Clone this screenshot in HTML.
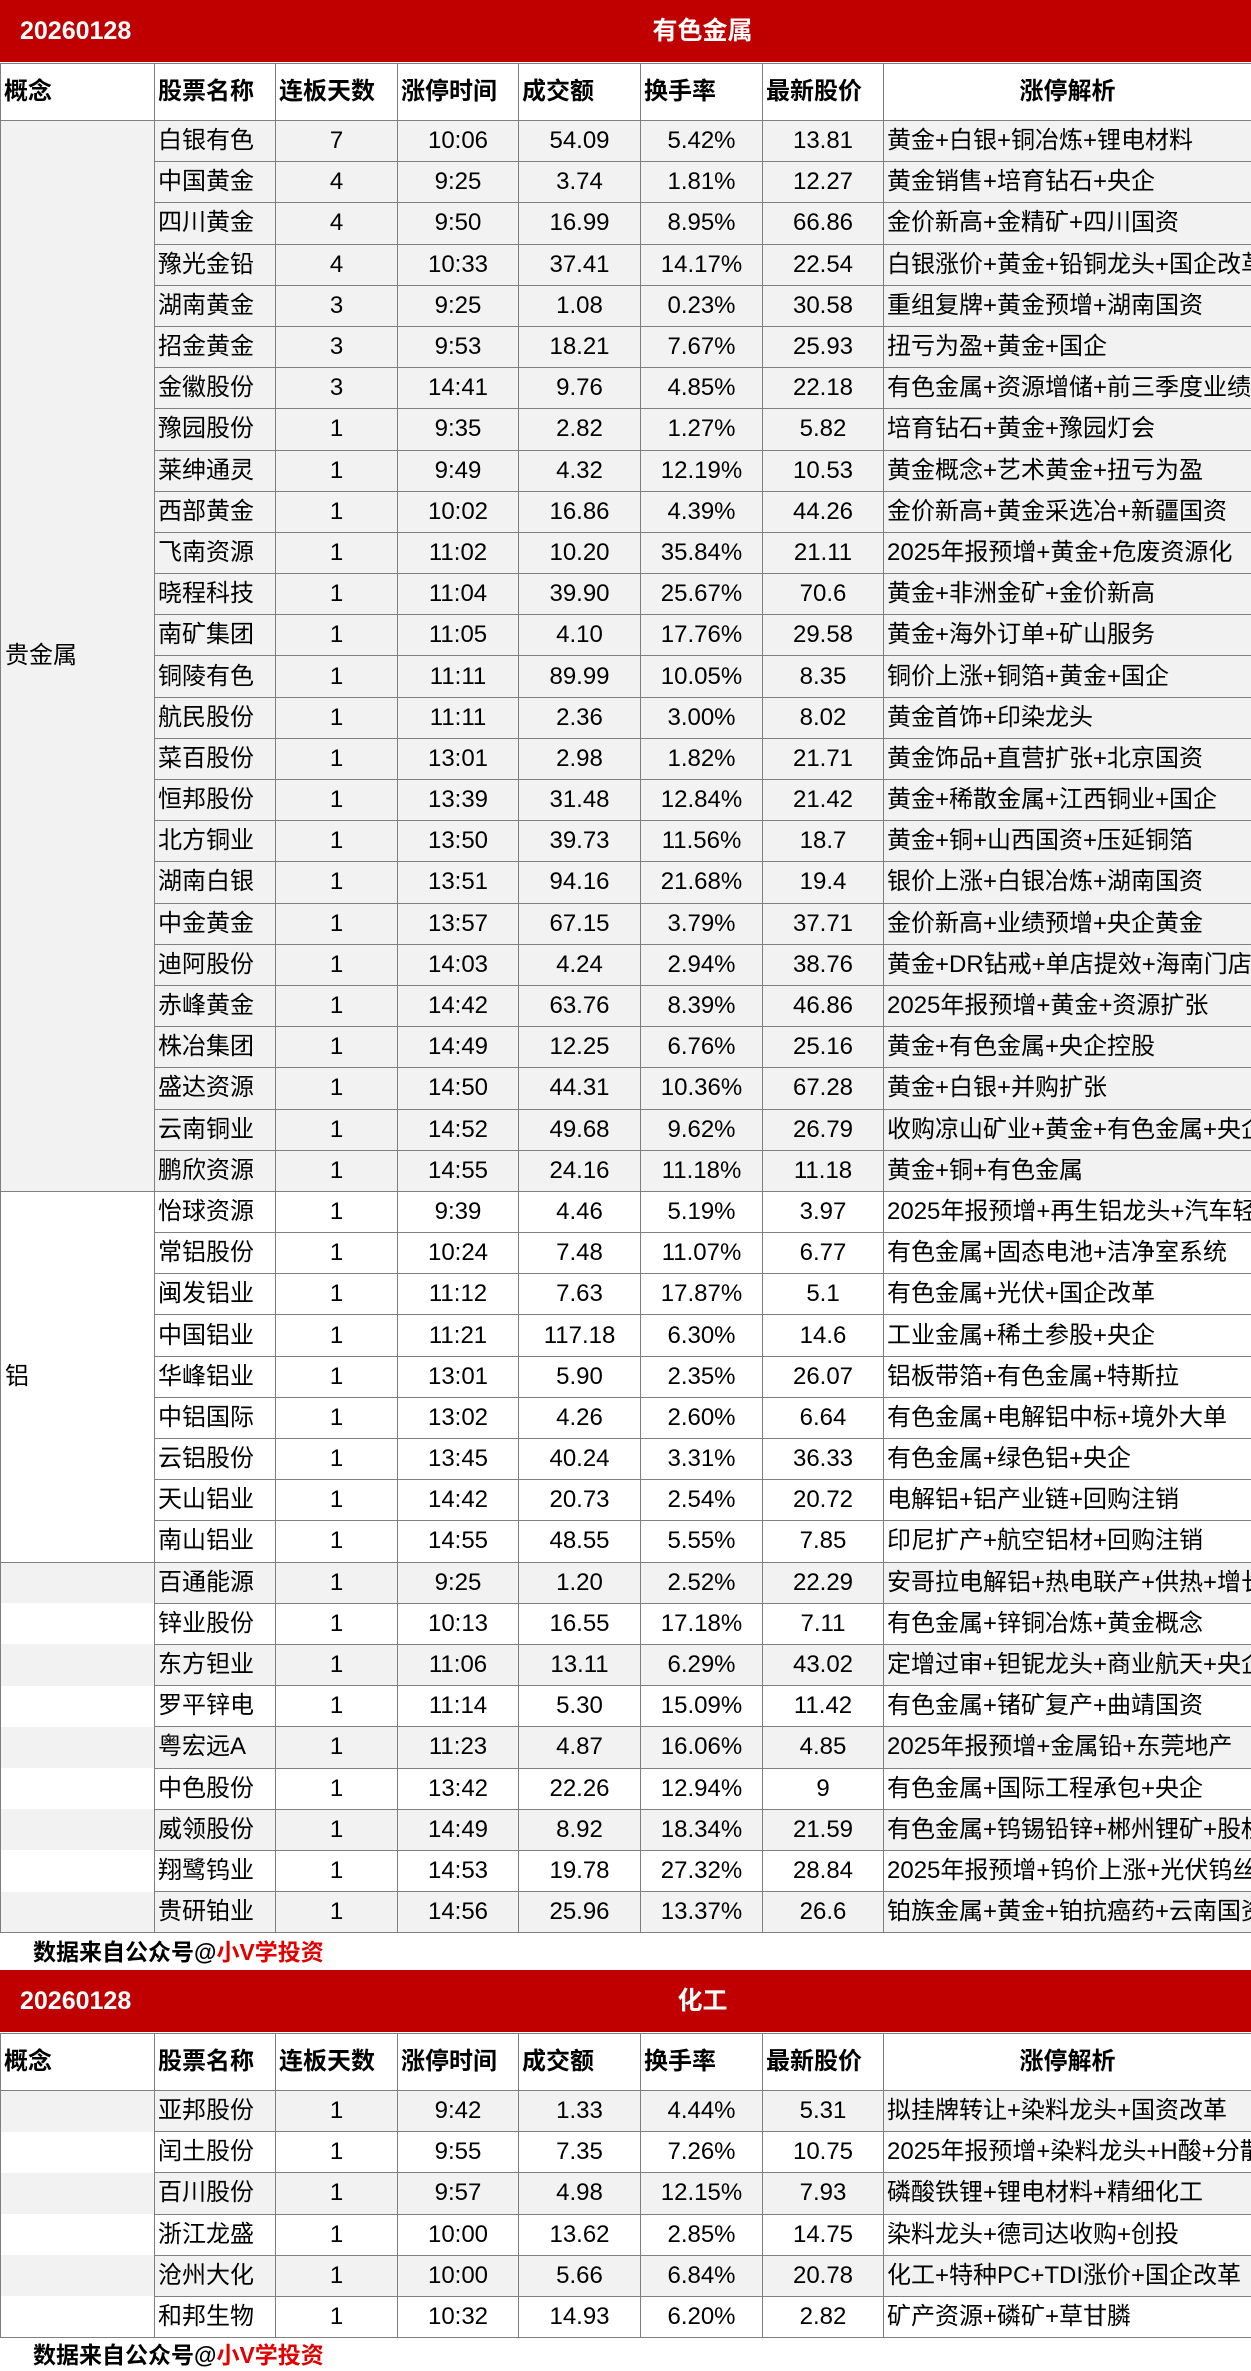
<!DOCTYPE html>
<html><head><meta charset="utf-8">
<style>
*{margin:0;padding:0;box-sizing:border-box}
html,body{width:1251px;height:2371px;background:#fff;overflow:hidden}
body{position:relative;font-family:"Liberation Sans","Noto Sans CJK SC",sans-serif;color:#000}
.red{position:absolute;left:0;width:1251px;height:62px;background:#c00000;color:#fff;font-weight:bold;font-size:25px}
.red .d{position:absolute;left:20px;top:0;line-height:62px}
.red .t{position:absolute;left:154px;right:0;top:0;line-height:62px;text-align:center}
table{position:absolute;left:0;width:1251px;border-collapse:collapse;table-layout:fixed;font-size:24px}
td{border:1px solid #7f7f7f;white-space:nowrap;overflow:hidden;padding:0 3px;vertical-align:middle;height:41.2px;line-height:1}
tr.h td{height:57px;font-weight:bold;background:#fff}
td.c{text-align:center}
tr.g td{background:#f2f2f2}
tr.w td{background:#fff}
td.k{vertical-align:middle;padding-left:4px}
td.e{border-top:none;border-bottom:none}
.ft{position:absolute;left:33px;font-size:23px;font-weight:bold;line-height:30px}
.ft span{color:#e00000}
</style></head><body>

<div class="red" style="top:0"><div class="d">20260128</div><div class="t">有色金属</div></div>
<table style="top:63px">
<colgroup><col style="width:154px"><col style="width:121px"><col style="width:122px"><col style="width:121px"><col style="width:122px"><col style="width:122px"><col style="width:121px"><col style="width:368px"></colgroup>
<tr class="h"><td>概念</td><td>股票名称</td><td>连板天数</td><td>涨停时间</td><td>成交额</td><td>换手率</td><td>最新股价</td><td class="c">涨停解析</td></tr>
<tr class="g"><td class="k" rowspan="26" style="background:#f2f2f2">贵金属</td><td>白银有色</td><td class="c">7</td><td class="c">10:06</td><td class="c">54.09</td><td class="c">5.42%</td><td class="c">13.81</td><td>黄金+白银+铜冶炼+锂电材料</td></tr>
<tr class="g"><td>中国黄金</td><td class="c">4</td><td class="c">9:25</td><td class="c">3.74</td><td class="c">1.81%</td><td class="c">12.27</td><td>黄金销售+培育钻石+央企</td></tr>
<tr class="g"><td>四川黄金</td><td class="c">4</td><td class="c">9:50</td><td class="c">16.99</td><td class="c">8.95%</td><td class="c">66.86</td><td>金价新高+金精矿+四川国资</td></tr>
<tr class="g"><td>豫光金铅</td><td class="c">4</td><td class="c">10:33</td><td class="c">37.41</td><td class="c">14.17%</td><td class="c">22.54</td><td>白银涨价+黄金+铅铜龙头+国企改革</td></tr>
<tr class="g"><td>湖南黄金</td><td class="c">3</td><td class="c">9:25</td><td class="c">1.08</td><td class="c">0.23%</td><td class="c">30.58</td><td>重组复牌+黄金预增+湖南国资</td></tr>
<tr class="g"><td>招金黄金</td><td class="c">3</td><td class="c">9:53</td><td class="c">18.21</td><td class="c">7.67%</td><td class="c">25.93</td><td>扭亏为盈+黄金+国企</td></tr>
<tr class="g"><td>金徽股份</td><td class="c">3</td><td class="c">14:41</td><td class="c">9.76</td><td class="c">4.85%</td><td class="c">22.18</td><td>有色金属+资源增储+前三季度业绩增长</td></tr>
<tr class="g"><td>豫园股份</td><td class="c">1</td><td class="c">9:35</td><td class="c">2.82</td><td class="c">1.27%</td><td class="c">5.82</td><td>培育钻石+黄金+豫园灯会</td></tr>
<tr class="g"><td>莱绅通灵</td><td class="c">1</td><td class="c">9:49</td><td class="c">4.32</td><td class="c">12.19%</td><td class="c">10.53</td><td>黄金概念+艺术黄金+扭亏为盈</td></tr>
<tr class="g"><td>西部黄金</td><td class="c">1</td><td class="c">10:02</td><td class="c">16.86</td><td class="c">4.39%</td><td class="c">44.26</td><td>金价新高+黄金采选冶+新疆国资</td></tr>
<tr class="g"><td>飞南资源</td><td class="c">1</td><td class="c">11:02</td><td class="c">10.20</td><td class="c">35.84%</td><td class="c">21.11</td><td>2025年报预增+黄金+危废资源化</td></tr>
<tr class="g"><td>晓程科技</td><td class="c">1</td><td class="c">11:04</td><td class="c">39.90</td><td class="c">25.67%</td><td class="c">70.6</td><td>黄金+非洲金矿+金价新高</td></tr>
<tr class="g"><td>南矿集团</td><td class="c">1</td><td class="c">11:05</td><td class="c">4.10</td><td class="c">17.76%</td><td class="c">29.58</td><td>黄金+海外订单+矿山服务</td></tr>
<tr class="g"><td>铜陵有色</td><td class="c">1</td><td class="c">11:11</td><td class="c">89.99</td><td class="c">10.05%</td><td class="c">8.35</td><td>铜价上涨+铜箔+黄金+国企</td></tr>
<tr class="g"><td>航民股份</td><td class="c">1</td><td class="c">11:11</td><td class="c">2.36</td><td class="c">3.00%</td><td class="c">8.02</td><td>黄金首饰+印染龙头</td></tr>
<tr class="g"><td>菜百股份</td><td class="c">1</td><td class="c">13:01</td><td class="c">2.98</td><td class="c">1.82%</td><td class="c">21.71</td><td>黄金饰品+直营扩张+北京国资</td></tr>
<tr class="g"><td>恒邦股份</td><td class="c">1</td><td class="c">13:39</td><td class="c">31.48</td><td class="c">12.84%</td><td class="c">21.42</td><td>黄金+稀散金属+江西铜业+国企</td></tr>
<tr class="g"><td>北方铜业</td><td class="c">1</td><td class="c">13:50</td><td class="c">39.73</td><td class="c">11.56%</td><td class="c">18.7</td><td>黄金+铜+山西国资+压延铜箔</td></tr>
<tr class="g"><td>湖南白银</td><td class="c">1</td><td class="c">13:51</td><td class="c">94.16</td><td class="c">21.68%</td><td class="c">19.4</td><td>银价上涨+白银冶炼+湖南国资</td></tr>
<tr class="g"><td>中金黄金</td><td class="c">1</td><td class="c">13:57</td><td class="c">67.15</td><td class="c">3.79%</td><td class="c">37.71</td><td>金价新高+业绩预增+央企黄金</td></tr>
<tr class="g"><td>迪阿股份</td><td class="c">1</td><td class="c">14:03</td><td class="c">4.24</td><td class="c">2.94%</td><td class="c">38.76</td><td>黄金+DR钻戒+单店提效+海南门店</td></tr>
<tr class="g"><td>赤峰黄金</td><td class="c">1</td><td class="c">14:42</td><td class="c">63.76</td><td class="c">8.39%</td><td class="c">46.86</td><td>2025年报预增+黄金+资源扩张</td></tr>
<tr class="g"><td>株冶集团</td><td class="c">1</td><td class="c">14:49</td><td class="c">12.25</td><td class="c">6.76%</td><td class="c">25.16</td><td>黄金+有色金属+央企控股</td></tr>
<tr class="g"><td>盛达资源</td><td class="c">1</td><td class="c">14:50</td><td class="c">44.31</td><td class="c">10.36%</td><td class="c">67.28</td><td>黄金+白银+并购扩张</td></tr>
<tr class="g"><td>云南铜业</td><td class="c">1</td><td class="c">14:52</td><td class="c">49.68</td><td class="c">9.62%</td><td class="c">26.79</td><td>收购凉山矿业+黄金+有色金属+央企</td></tr>
<tr class="g"><td>鹏欣资源</td><td class="c">1</td><td class="c">14:55</td><td class="c">24.16</td><td class="c">11.18%</td><td class="c">11.18</td><td>黄金+铜+有色金属</td></tr>
<tr class="w"><td class="k" rowspan="9">铝</td><td>怡球资源</td><td class="c">1</td><td class="c">9:39</td><td class="c">4.46</td><td class="c">5.19%</td><td class="c">3.97</td><td>2025年报预增+再生铝龙头+汽车轻量化</td></tr>
<tr class="w"><td>常铝股份</td><td class="c">1</td><td class="c">10:24</td><td class="c">7.48</td><td class="c">11.07%</td><td class="c">6.77</td><td>有色金属+固态电池+洁净室系统</td></tr>
<tr class="w"><td>闽发铝业</td><td class="c">1</td><td class="c">11:12</td><td class="c">7.63</td><td class="c">17.87%</td><td class="c">5.1</td><td>有色金属+光伏+国企改革</td></tr>
<tr class="w"><td>中国铝业</td><td class="c">1</td><td class="c">11:21</td><td class="c">117.18</td><td class="c">6.30%</td><td class="c">14.6</td><td>工业金属+稀土参股+央企</td></tr>
<tr class="w"><td>华峰铝业</td><td class="c">1</td><td class="c">13:01</td><td class="c">5.90</td><td class="c">2.35%</td><td class="c">26.07</td><td>铝板带箔+有色金属+特斯拉</td></tr>
<tr class="w"><td>中铝国际</td><td class="c">1</td><td class="c">13:02</td><td class="c">4.26</td><td class="c">2.60%</td><td class="c">6.64</td><td>有色金属+电解铝中标+境外大单</td></tr>
<tr class="w"><td>云铝股份</td><td class="c">1</td><td class="c">13:45</td><td class="c">40.24</td><td class="c">3.31%</td><td class="c">36.33</td><td>有色金属+绿色铝+央企</td></tr>
<tr class="w"><td>天山铝业</td><td class="c">1</td><td class="c">14:42</td><td class="c">20.73</td><td class="c">2.54%</td><td class="c">20.72</td><td>电解铝+铝产业链+回购注销</td></tr>
<tr class="w"><td>南山铝业</td><td class="c">1</td><td class="c">14:55</td><td class="c">48.55</td><td class="c">5.55%</td><td class="c">7.85</td><td>印尼扩产+航空铝材+回购注销</td></tr>
<tr class="g"><td class="e"></td><td>百通能源</td><td class="c">1</td><td class="c">9:25</td><td class="c">1.20</td><td class="c">2.52%</td><td class="c">22.29</td><td>安哥拉电解铝+热电联产+供热+增长</td></tr>
<tr class="w"><td class="e"></td><td>锌业股份</td><td class="c">1</td><td class="c">10:13</td><td class="c">16.55</td><td class="c">17.18%</td><td class="c">7.11</td><td>有色金属+锌铜冶炼+黄金概念</td></tr>
<tr class="g"><td class="e"></td><td>东方钽业</td><td class="c">1</td><td class="c">11:06</td><td class="c">13.11</td><td class="c">6.29%</td><td class="c">43.02</td><td>定增过审+钽铌龙头+商业航天+央企</td></tr>
<tr class="w"><td class="e"></td><td>罗平锌电</td><td class="c">1</td><td class="c">11:14</td><td class="c">5.30</td><td class="c">15.09%</td><td class="c">11.42</td><td>有色金属+锗矿复产+曲靖国资</td></tr>
<tr class="g"><td class="e"></td><td>粤宏远A</td><td class="c">1</td><td class="c">11:23</td><td class="c">4.87</td><td class="c">16.06%</td><td class="c">4.85</td><td>2025年报预增+金属铅+东莞地产</td></tr>
<tr class="w"><td class="e"></td><td>中色股份</td><td class="c">1</td><td class="c">13:42</td><td class="c">22.26</td><td class="c">12.94%</td><td class="c">9</td><td>有色金属+国际工程承包+央企</td></tr>
<tr class="g"><td class="e"></td><td>威领股份</td><td class="c">1</td><td class="c">14:49</td><td class="c">8.92</td><td class="c">18.34%</td><td class="c">21.59</td><td>有色金属+钨锡铅锌+郴州锂矿+股权</td></tr>
<tr class="w"><td class="e"></td><td>翔鹭钨业</td><td class="c">1</td><td class="c">14:53</td><td class="c">19.78</td><td class="c">27.32%</td><td class="c">28.84</td><td>2025年报预增+钨价上涨+光伏钨丝</td></tr>
<tr class="g"><td class="e" style="border-bottom:1px solid #7f7f7f"></td><td>贵研铂业</td><td class="c">1</td><td class="c">14:56</td><td class="c">25.96</td><td class="c">13.37%</td><td class="c">26.6</td><td>铂族金属+黄金+铂抗癌药+云南国资</td></tr>
</table>
<div class="ft" style="top:1937px">数据来自公众号@<span>小V学投资</span></div>

<div class="red" style="top:1970px"><div class="d">20260128</div><div class="t">化工</div></div>
<table style="top:2033px">
<colgroup><col style="width:154px"><col style="width:121px"><col style="width:122px"><col style="width:121px"><col style="width:122px"><col style="width:122px"><col style="width:121px"><col style="width:368px"></colgroup>
<tr class="h"><td>概念</td><td>股票名称</td><td>连板天数</td><td>涨停时间</td><td>成交额</td><td>换手率</td><td>最新股价</td><td class="c">涨停解析</td></tr>
<tr class="g"><td class="e"></td><td>亚邦股份</td><td class="c">1</td><td class="c">9:42</td><td class="c">1.33</td><td class="c">4.44%</td><td class="c">5.31</td><td>拟挂牌转让+染料龙头+国资改革</td></tr>
<tr class="w"><td class="e"></td><td>闰土股份</td><td class="c">1</td><td class="c">9:55</td><td class="c">7.35</td><td class="c">7.26%</td><td class="c">10.75</td><td>2025年报预增+染料龙头+H酸+分散染料</td></tr>
<tr class="g"><td class="e"></td><td>百川股份</td><td class="c">1</td><td class="c">9:57</td><td class="c">4.98</td><td class="c">12.15%</td><td class="c">7.93</td><td>磷酸铁锂+锂电材料+精细化工</td></tr>
<tr class="w"><td class="e"></td><td>浙江龙盛</td><td class="c">1</td><td class="c">10:00</td><td class="c">13.62</td><td class="c">2.85%</td><td class="c">14.75</td><td>染料龙头+德司达收购+创投</td></tr>
<tr class="g"><td class="e"></td><td>沧州大化</td><td class="c">1</td><td class="c">10:00</td><td class="c">5.66</td><td class="c">6.84%</td><td class="c">20.78</td><td>化工+特种PC+TDI涨价+国企改革</td></tr>
<tr class="w"><td class="e" style="border-bottom:1px solid #7f7f7f"></td><td>和邦生物</td><td class="c">1</td><td class="c">10:32</td><td class="c">14.93</td><td class="c">6.20%</td><td class="c">2.82</td><td>矿产资源+磷矿+草甘膦</td></tr>
</table>
<div class="ft" style="top:2340px">数据来自公众号@<span>小V学投资</span></div>
</body></html>
